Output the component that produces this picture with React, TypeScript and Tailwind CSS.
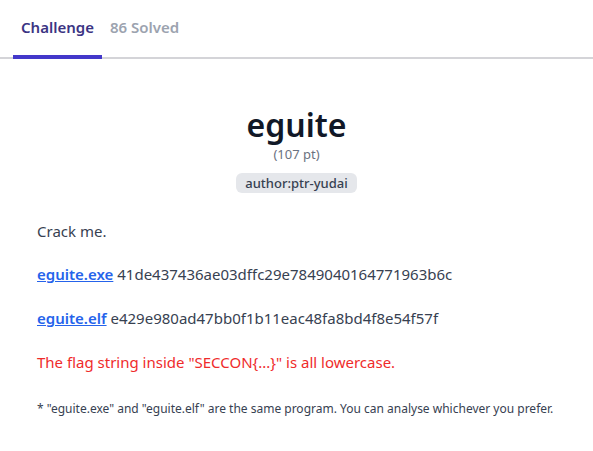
export default function App() {
  return (
    <div className="w-[593px] h-[451px] bg-white text-[#374151] [font-family:'Noto_Sans',sans-serif]">
      <nav className="flex border-b-2 border-[#d4d4d8] px-[13px]">
        <button className="relative px-[8px] pt-[16px] pb-[18px] text-[15px] font-semibold text-[#3b3483]">
          Challenge
          <span className="absolute left-0 right-0 bottom-[-2px] h-[4px] bg-[#4338ca]" />
        </button>
        <button className="px-[8px] pt-[16px] pb-[18px] text-[15px] font-semibold text-[#9ca3af]">
          86 Solved
        </button>
      </nav>

      <main className="px-[37px] pt-[45px]">
        <div className="flex flex-col items-center">
          <h1 className="text-[32px] font-semibold leading-[42px] text-[#111827]">eguite</h1>
          <p className="text-[13px] leading-[16px] text-[#6b7280]">(107 pt)</p>
          <span className="mt-[11px] rounded-md bg-[#e5e7eb] px-[9px] py-[1px] text-[13px] font-medium leading-[18px] text-[#374151]">
            author:ptr-yudai
          </span>
        </div>

        <div className="mt-[27px] text-[15px] leading-[22px]">
          <p>Crack me.</p>
          <p className="mt-[21px]">
            <a href="#" className="font-semibold text-[#2563eb] underline">eguite.exe</a>{" "}
            41de437436ae03dffc29e7849040164771963b6c
          </p>
          <p className="mt-[22px]">
            <a href="#" className="font-semibold text-[#2563eb] underline">eguite.elf</a>{" "}
            e429e980ad47bb0f1b11eac48fa8bd4f8e54f57f
          </p>
          <p className="mt-[22px] text-[#ef2b2b]">The flag string inside "SECCON{"{...}"}" is all lowercase.</p>
          <p className="mt-[27px] text-[12px] leading-[18px]">
            * "eguite.exe" and "eguite.elf" are the same program. You can analyse whichever you prefer.
          </p>
        </div>
      </main>
    </div>
  );
}
